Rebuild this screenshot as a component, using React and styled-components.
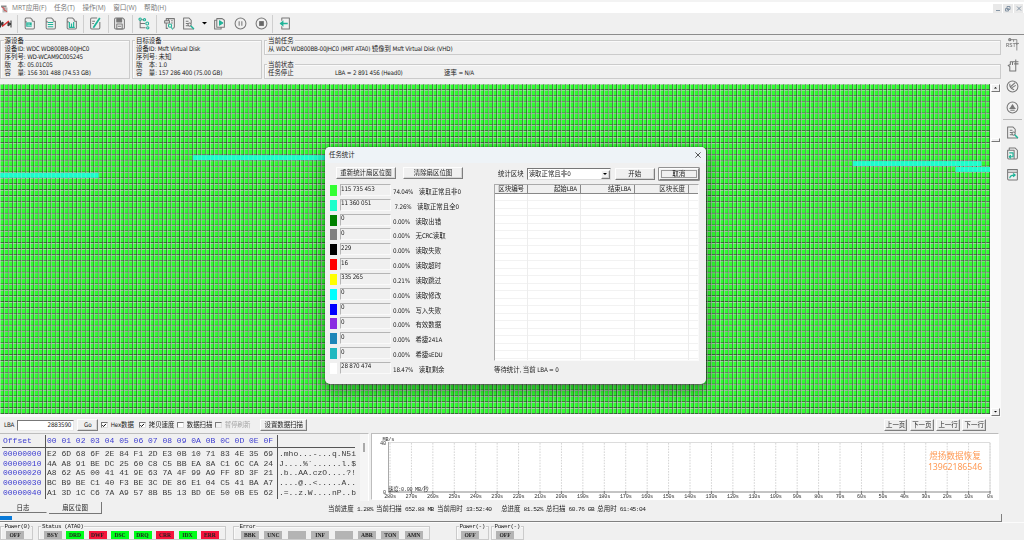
import { useEffect, useRef } from "react";
import styled, { createGlobalStyle } from "styled-components";

const CJK = '"Noto Sans CJK SC", sans-serif';

const GlobalStyle = createGlobalStyle`
  * {
    box-sizing: border-box;
  }
  body {
    margin: 0;
    background: #f0f0f0;
    overflow: hidden;
  }
`;

const Run = styled.span`
  font-family: ${(p) => (p.$mono ? '"Liberation Mono"' : '"DejaVu Sans Condensed", "DejaVu Sans"')}, ${CJK};
  font-stretch: condensed;
  font-size: ${(p) => (p.$mono ? 6.2 : 6.25)}px;
  letter-spacing: ${(p) => (p.$mono ? -0.51 : -0.2)}px;
`;

const Line = styled.span`
  display: inline-block;
  white-space: pre;
  font-family: ${CJK};
  font-size: 6.43px;
  line-height: 8px;
  height: 8px;
`;

// latin runs are narrower than the chinese ones, so they get their own font
const Label = ({ children, mono, className }) => (
  <Line className={className}>
    {children.split(/([\x20-\x7e]+)/).map((part, i) =>
      i % 2 ? (
        <Run key={i} $mono={mono}>
          {part}
        </Run>
      ) : (
        part
      )
    )}
  </Line>
);

const Window = styled.div`
  position: relative;
  display: flex;
  flex-direction: column;
  width: 1024px;
  height: 540px;
  background: #f0f0f0;
  color: #1c1c1c;
`;

/* ---------- menu + toolbar ---------- */

const MenuBar = styled.div`
  display: flex;
  align-items: center;
  height: 13px;
  padding: 2px 1px 0 1px;
  border-top: 2px solid #f3f3f3;
  background: #fff;
`;

const MenuItems = styled.div`
  display: flex;
  flex: 1;
  gap: 7.6px;
  margin: -2px 0 0 4px;
  font-family: "Open Sans", ${CJK};
  font-size: 6.65px;
  line-height: 9px;
  color: #777;
`;

const MdiButtons = styled.div`
  display: flex;
  gap: 1px;
  margin-top: -1px;
`;

const MdiButton = styled.div`
  display: flex;
  width: 9.5px;
  height: 9px;
  background: #e9e9e9;
`;

const Toolbar = styled.div`
  display: flex;
  align-items: center;
  height: 22px;
  border-bottom: 1px solid #8c8c8c;
  svg {
    flex: none;
  }
`;

const Separator = styled.div`
  width: 1px;
  height: 18px;
  background: #cfcfcf;
  margin: 0 ${(p) => p.$after}px 0 ${(p) => p.$before}px;
`;

const Gap = styled.div`
  width: ${(p) => p.$w}px;
`;

const Svg = ({ size = 13, children }) => (
  <svg
    width={size}
    height={size}
    viewBox="0 0 24 24"
    fill="none"
    stroke="#777"
    strokeWidth="1.9"
    strokeLinejoin="round"
  >
    {children}
  </svg>
);

const teal = "#1fb398";

const FileIcon = ({ kind }) => (
  <Svg>
    <path d="M7 9H4V4q0-2 2-2h8l3 3v3M4 8v12q0 2 2 2h13q2 0 2-2V8h-4" />
    {kind === "fill" && <path d="M6 10h10v8H6z" fill={teal} stroke="none" />}
    {kind === "fill" && <path d="M8 13h5M8 16h8" stroke="#d6f1ec" strokeWidth="1.3" />}
    {kind === "lines" && <path d="M7 10h10M7 14h10M7 18h10" stroke={teal} />}
    {kind === "bars" && <path d="M8 9v10h10M12 12v6M16 9v9" stroke={teal} strokeWidth="2.2" />}
  </Svg>
);

const EditIcon = () => (
  <Svg>
    <path d="M15 2H5q-2 0-2 2v16q0 2 2 2h13q2 0 2-2V9M6 8h5M6 12h3" />
    <path d="M20 2L8 20" stroke={teal} strokeWidth="3.2" />
  </Svg>
);

const SaveIcon = () => (
  <Svg>
    <path d="M5 2h13l3 3v15q0 2-2 2H5q-2 0-2-2V4q0-2 2-2z" />
    <path d="M7 3h9v6H7z" fill="#777" />
    <path d="M7 13h10v9H7zM9 17h6" />
  </Svg>
);

const TreeIcon = () => (
  <Svg>
    <path d="M4 5v15h10M4 12h9M6 5h4" />
    <g stroke={teal}>
      <circle cx="4" cy="4" r="2.2" />
      <circle cx="12" cy="5" r="2" />
      <circle cx="17" cy="12" r="2.6" />
      <circle cx="18" cy="20" r="2.2" />
    </g>
  </Svg>
);

const ScanIcon = () => (
  <Svg>
    <path d="M6 7V3h15v15q0 3-3 3M3 7h9v4H3zM6 11v10h3M10 3v4M15 7h3M15 11h3" />
    <circle cx="13" cy="16" r="3" stroke={teal} />
    <path d="M15 19l3 4" stroke={teal} />
  </Svg>
);

const SearchIcon = () => (
  <Svg>
    <path d="M14 22H3V2h10l4 4v6M7 8h5M7 12h4M7 16h5M2 22h20" />
    <circle cx="14" cy="14" r="3" />
    <path d="M16 16l6 6" stroke={teal} strokeWidth="2.6" />
  </Svg>
);

const PlayIcon = () => (
  <Svg>
    <path d="M7 3h10l4 3v13H7zM7 6H3v16h12v-3" />
    <path d="M12 7l6 4-6 4z" fill={teal} stroke={teal} />
  </Svg>
);

const ExitIcon = () => (
  <Svg>
    <path d="M7 7V2h14v20H7v-5" />
    <path d="M18 12H5" stroke={teal} strokeWidth="2.8" />
    <path d="M10 6l-7 6 7 6z" fill={teal} stroke="none" />
  </Svg>
);

const CircleIcon = ({ children }) => (
  <Svg>
    <circle cx="12" cy="12" r="10" />
    {children}
  </Svg>
);

const RstText = styled.text`
  font: 10px "Liberation Mono", monospace;
  fill: #666;
  stroke: none;
`;

/* ---------- shared controls ---------- */

const Button = styled.div`
  display: flex;
  align-items: center;
  justify-content: center;
  width: ${(p) => p.$w}px;
  height: ${(p) => p.$h || 12}px;
  border: 1px solid;
  border-color: #fdfdfd #7e7e7e #7e7e7e #fdfdfd;
  box-shadow: ${(p) => (p.$focus ? "0 0 0 0.6px #555, inset 0 0 0 1px #f0f0f0, inset 0 0 0 2px #999" : "inset -1px -1px 0 #d5d5d5")};
  background: #f0f0f0;
`;

const GroupBox = styled.div`
  width: ${(p) => p.$w}px;
  height: ${(p) => p.$h}px;
  border: 1px solid #cbcbcb;
  box-shadow: inset 1px 1px 0 #fafafa;
  padding-left: ${(p) => p.$pad ?? 3}px;
  display: flex;
  flex-direction: column;
  align-items: flex-start;
`;

const Legend = styled.div`
  display: flex;
  height: 8px;
  margin-top: -4px;
  padding: 0 1px;
  margin-left: -1px;
  background: #f0f0f0;
`;

/* ---------- device info ---------- */

const Body = styled.div`
  display: flex;
  height: 487px;
`;

const Main = styled.div`
  width: 1001px;
`;

const InfoRow = styled.div`
  display: flex;
  gap: 2px;
  height: 49px;
  padding-top: 5px;
`;

const TaskColumn = styled.div`
  display: flex;
  flex-direction: column;
  gap: 9px;
`;

const StateLine = styled.div`
  display: grid;
  grid-template-columns: 67px 109px auto;
`;

/* ---------- sector map ---------- */

const MapRow = styled.div`
  display: flex;
  height: 333px;
  background: #fafafa;
`;

const Canvas = styled.canvas`
  width: 990px;
  height: 330px;
`;

const ScrollBar = styled.div`
  display: flex;
  flex-direction: column;
  width: 10px;
  padding-left: 1px;
`;

const ScrollButton = styled.div`
  display: flex;
  align-items: center;
  justify-content: center;
  height: ${(p) => p.$h}px;
  margin-top: ${(p) => p.$top || 0}px;
  border: 1px solid;
  border-color: #fff #777 #777 #fff;
  background: #f0f0f0;
`;

const CELL_W = 4.2855;
const CELL_H = 5.892;
const COLS = 231;
const ROWS = 56;
// sectors that were read fine but contain only zeroes
const zeroRuns = [
  { row: 12, from: 45, to: 120 },
  { row: 13, from: 199, to: 229 },
  { row: 14, from: 223, to: 231 },
  { row: 15, from: 0, to: 23 },
];

const SectorMap = () => {
  const ref = useRef(null);

  useEffect(() => {
    const ctx = ref.current.getContext("2d");
    ctx.fillStyle = "#2fff2f";
    ctx.fillRect(0, 0, 990, 330);
    for (let y = 0; y <= ROWS; y++) {
      ctx.fillStyle = "#303030";
      ctx.fillRect(0, y * CELL_H - 0.7, 990, 0.7);
      ctx.fillStyle = "#dcd0dc";
      ctx.fillRect(0, y * CELL_H, 990, 0.6);
    }
    for (let x = 0; x <= COLS; x++) {
      ctx.fillStyle = "#303030";
      ctx.fillRect(x * CELL_W - 0.65, 0, 0.65, 330);
      ctx.fillStyle = "#dcd0dc";
      ctx.fillRect(x * CELL_W, 0, 0.55, 330);
    }
    zeroRuns.forEach(({ row, from, to }) => {
      ctx.fillStyle = "#1affcc";
      ctx.fillRect(from * CELL_W, row * CELL_H + 0.5, (to - from) * CELL_W, CELL_H - 1);
      ctx.fillStyle = "#7fe6d4";
      for (let c = from; c < to; c++) {
        ctx.fillRect(c * CELL_W, row * CELL_H + 0.5, 0.5, CELL_H - 1);
      }
    });
  }, []);

  return <Canvas ref={ref} width={990} height={330} />;
};

/* ---------- lower controls ---------- */

const ControlRow = styled.div`
  display: flex;
  align-items: center;
  height: 16px;
  padding-left: 4px;
`;

const Input = styled.div`
  display: flex;
  justify-content: flex-end;
  align-items: center;
  width: 57px;
  height: 11px;
  margin: 0 3px 0 3px;
  padding-right: 2px;
  border: 1px solid;
  border-color: #777 #e8e8e8 #e8e8e8 #777;
  background: #fff;
`;

const CheckItem = styled.div`
  display: flex;
  align-items: center;
  gap: 3px;
  width: ${(p) => p.$w}px;
  color: ${(p) => (p.$off ? "#a5a5a5" : "inherit")};
`;

const Box = styled.div`
  display: flex;
  width: 6.5px;
  height: 6.5px;
  border: 1px solid;
  border-color: #777 #ddd #ddd #777;
  background: ${(p) => (p.$off ? "#f0f0f0" : "#fff")};
`;

const Check = ({ w, on, off, children }) => (
  <CheckItem $w={w} $off={off}>
    <Box $off={off}>
      {on && (
        <svg width="5" height="5" viewBox="0 0 5 5" fill="none" stroke="#000" strokeWidth="1.1">
          <path d="M0.4 2.2L1.7 3.6L4.4 0.7" />
        </svg>
      )}
    </Box>
    <Label>{children}</Label>
  </CheckItem>
);

const Pager = styled.div`
  display: flex;
  gap: 2.6px;
  margin-left: auto;
  padding-right: 15px;
`;

/* ---------- hex view ---------- */

const BottomRow = styled.div`
  display: flex;
  height: 68px;
`;

const HexPanel = styled.div`
  display: flex;
  width: 369px;
  margin-right: 2px;
  border-top: 1px solid #bdbdbd;
  border-right: 1px solid #fff;
`;

const HexTable = styled.div`
  display: grid;
  grid-template-columns: 44px 232px 77px;
  grid-template-rows: 13px 51px;
  width: 353px;
  margin: 1px 5px 0 2px;
  font-family: "Liberation Mono", monospace;
  font-size: 8.03px;
  line-height: 9.65px;
  white-space: pre;
  color: #3a3a3a;
`;

const HexCell = styled.div`
  height: ${(p) => (p.$head ? 13 : 51)}px;
  padding: 1px 0 0 1px;
  color: ${(p) => (p.$blue ? "#3c3cd0" : "inherit")};
  border-right: ${(p) => (p.$line ? "1px solid #555" : "none")};
  border-bottom: ${(p) => (p.$head ? "1px solid #555" : "none")};
`;

const HexScroll = styled.div`
  width: 8px;
  padding: 9px 0 0 3px;
  background: #f5f5f5;
`;

const HexThumb = styled.div`
  width: 2px;
  height: 9px;
  background: #aaa;
`;

const hexRows = [
  ["00000000", "E2 6D 68 6F 2E 84 F1 2D E3 0B 10 71 83 4E 35 69", ".mho...-...q.N5i"],
  ["00000010", "4A A8 91 BE DC 25 60 C8 C5 BB EA 8A C1 6C CA 24", "J....%`......l.$"],
  ["00000020", "A8 62 A5 00 41 41 9E 63 7A 4F 99 A9 FF 8D 3F 21", ".b..AA.czO....?!"],
  ["00000030", "BC B9 BE C1 40 F3 BE 3C DE 86 E1 04 C5 41 BA A7", "....@..<.....A.."],
  ["00000040", "A1 3D 1C C6 7A A9 57 8B B5 13 BD 6E 50 0B E5 62", ".=..z.W....nP..b"],
];
const hexColumn = (i) => hexRows.map((row) => row[i]).join("\n");

/* ---------- speed chart ---------- */

const ChartPanel = styled.div`
  position: relative;
  width: 628px;
  height: 67px;
  border: 1px solid #bdbdbd;
  border-right-color: #fff;
  border-bottom-color: #fff;
  background: #fff;
  svg {
    display: block;
  }
  text {
    font: 5.2px "Liberation Mono", "Noto Sans CJK SC", monospace;
    letter-spacing: -0.2px;
    fill: #333;
  }
`;

const Watermark = styled.div`
  position: absolute;
  top: 17px;
  right: 13px;
  width: 60px;
  text-align: center;
  font-family: "Noto Sans", ${CJK};
  font-size: 8.6px;
  line-height: 11px;
  color: #ff9a55;
  span {
    display: block;
    font-size: 8.7px;
    letter-spacing: -0.05px;
  }
`;

const SpeedChart = () => {
  const ticks = Array.from({ length: 29 }, (_, i) => i);
  return (
    <ChartPanel>
      <svg width="626" height="65" viewBox="0 0 626 65">
        <path d="M16.5 8.5H618V58" stroke="#dcdcdc" fill="none" />
        <path d="M16.5 8v50" stroke="#aaa" />
        {ticks.map((i) => (
          <g key={i}>
            <path
              d={`M${18 + i * 21.43} 9v49`}
              stroke="#d4d4d4"
              strokeDasharray="1.6 1.2"
            />
            <path d={`M${18 + i * 21.43} 57v3`} stroke="#555" strokeWidth="0.8" />
            <text x={18 + i * 21.43} y="64.2" textAnchor="middle">
              {280 - i * 10}s
            </text>
          </g>
        ))}
        <path d="M16 58H618.5" stroke="#888" />
        <text x="10.5" y="6.5">MB/s</text>
        <text x="8" y="10.8">40</text>
        <text x="11" y="59.6">0</text>
        <text x="16.5" y="57.2" textLength="40">速度:0.00 MB/秒</text>
      </svg>
      <Watermark>
        煜扬数据恢复
        <span>13962186546</span>
      </Watermark>
    </ChartPanel>
  );
};

/* ---------- tabs, progress, status ---------- */

const TabRow = styled.div`
  display: flex;
  align-items: center;
  height: 13px;
`;

const Tab = styled.div`
  display: flex;
  align-items: center;
  justify-content: center;
  width: ${(p) => p.$w}px;
  height: ${(p) => (p.$active ? 12 : 10)}px;
  padding-top: 1px;
  margin-right: 2px;
  border-bottom: 1px solid #777;
  border-right: 1px solid ${(p) => (p.$active ? "#777" : "#f0f0f0")};
`;

const ProgressText = styled.div`
  display: flex;
  margin: 2px 0 0 224px;
`;

const Progress = styled.div`
  width: 1002px;
  height: 8px;
  padding-top: 2px;
  border-bottom: 1px solid #808080;
  border-right: 1px solid #808080;
`;

const ProgressBar = styled.div`
  width: 12px;
  height: 4px;
  background: #0a7ad8;
`;

const StatusRow = styled.div`
  display: flex;
  height: 18px;
  padding-top: 3px;
  border-top: 1px solid #fbfbfb;
`;

const StatusGroup = styled(GroupBox)`
  height: 14px;
  margin-right: ${(p) => p.$mr}px;
`;

const Leds = styled.div`
  display: flex;
  gap: ${(p) => p.$gap || 4.5}px;
`;

const ledColors = { on: "#00ff1a", error: "#f5143c", idle: "#b4b4b4" };

const Led = styled.div`
  display: flex;
  align-items: center;
  justify-content: center;
  width: 18px;
  height: 8px;
  font: bold 5.6px/8px "Liberation Serif", serif;
  color: #222;
  background: ${(p) => ledColors[p.$state || "idle"]};
`;

const StatusLegend = styled(Legend)`
  margin-left: -2.5px;
  font: 6px/8px "Liberation Mono", monospace;
  letter-spacing: -0.42px;
  white-space: pre;
`;

const statusLeds = [
  ["BSY", "idle"],
  ["DRD", "on"],
  ["DWF", "error"],
  ["DSC", "on"],
  ["DRQ", "on"],
  ["CRR", "error"],
  ["IDX", "on"],
  ["ERR", "error"],
];
const errorLeds = ["BBK", "UNC", "", "INF", "", "ABR", "TON", "AMN"];

/* ---------- side bar ---------- */

const SideBar = styled.div`
  display: flex;
  flex-direction: column;
  align-items: center;
  gap: 8px;
  width: 22px;
  padding-top: 3px;
`;

const SideLine = styled.div`
  width: 19px;
  height: 1px;
  margin: -3px 0 -2px;
  background: #bbb;
`;

/* ---------- dialog ---------- */

const Dialog = styled.div`
  position: absolute;
  left: 325px;
  top: 147px;
  width: 381px;
  height: 237px;
  border-radius: 5px;
  overflow: hidden;
  background: #f0f0f0;
`;

const DialogShadow = styled.div`
  position: absolute;
  left: 325px;
  top: 147px;
  width: 381px;
  height: 237px;
  border-radius: 5px;
  box-shadow: 0 5px 14px 2px rgba(0, 0, 0, 0.34), 0 0 2px rgba(0, 0, 0, 0.5);
`;

const TitleBar = styled.div`
  display: flex;
  align-items: center;
  justify-content: space-between;
  height: 16px;
  padding: 0 5px 1px 4px;
  background: #eef3f7;
`;

const DialogBody = styled.div`
  display: flex;
  padding: 4px 7px 0 5px;
`;

const StatsColumn = styled.div`
  width: 164px;
`;

const ButtonPair = styled.div`
  display: flex;
  gap: 7px;
  padding-left: 6px;
  margin-bottom: 5px;
`;

const StatRow = styled.div`
  display: flex;
  height: 14.83px;
`;

const Swatch = styled.div`
  width: 7px;
  height: 11px;
  margin: 1px 3px 0 0;
  background: ${(p) => p.$color};
`;

const Field = styled.div`
  display: flex;
  width: 50.5px;
  height: 12px;
  margin-right: 2.5px;
  border: 1px solid;
  border-color: #b5b5b5 #fafafa #fafafa #b5b5b5;
  span {
    margin-top: -0.5px;
  }
`;

const StatText = styled.div`
  display: flex;
  gap: 5.6px;
  padding-top: 4px;
`;

const BlockColumn = styled.div`
  display: flex;
  flex-direction: column;
  width: 205px;
`;

const Filter = styled.div`
  display: flex;
  align-items: center;
  height: 14px;
  margin-bottom: 3px;
  padding-left: 4px;
`;

const Select = styled.div`
  display: flex;
  align-items: center;
  justify-content: space-between;
  width: 84px;
  height: 11.5px;
  margin: 0 4px 0 3px;
  padding-left: 1px;
  border: 1px solid;
  border-color: #777 #ddd #ddd #777;
  background: #fff;
`;

const List = styled.div`
  height: 177px;
  border: 1px solid;
  border-color: #aaa #fafafa #fafafa #aaa;
  background: #fff;
`;

const cols = "32.5px 53px 54px 54px 1fr";

const ListHead = styled.div`
  display: grid;
  grid-template-columns: ${cols};
  height: 9px;
  background: #f0f0f0;
  border-bottom: 1px solid #888;
`;

const HeadCell = styled.div`
  display: flex;
  justify-content: flex-end;
  padding-right: 2.5px;
  border-right: ${(p) => (p.$last ? "none" : "1px solid #888")};
`;

const ListGrid = styled.div`
  display: grid;
  grid-template-columns: ${cols};
  height: 166px;
  background: repeating-linear-gradient(transparent 0 6.5px, #f2f2f2 6.5px 7.5px);
`;

const GridColumn = styled.div`
  border-right: ${(p) => (p.$last ? "none" : "1px solid #ededed")};
`;

const Note = styled.div`
  display: flex;
  padding-top: 5px;
`;

const stats = [
  ["#33ff33", "115 735 453", "74.04%", "读取正常且非0"],
  ["#1affcc", "11 360 051", " 7.26%", "读取正常且全0"],
  ["#008000", "0", "0.00%", "读取出错"],
  ["#808080", "0", "0.00%", "无CRC读取"],
  ["#000000", "229", "0.00%", "读取失败"],
  ["#ff0000", "16", "0.00%", "读取超时"],
  ["#ffff00", "335 265", "0.21%", "读取跳过"],
  ["#00ffff", "0", "0.00%", "读取修改"],
  ["#0000ff", "0", "0.00%", "写入失败"],
  ["#8a2be2", "0", "0.00%", "有效数据"],
  ["#1e86b8", "0", "0.00%", "希捷241A"],
  ["#20b8c0", "0", "0.00%", "希捷sEDU"],
  ["#ffffff", "28 870 474", "18.47%", "读取剩余"],
];

const Arrow = ({ up, size = 4 }) => (
  <svg width={size} height={size / 2} viewBox="0 0 8 4">
    <path d={up ? "M0 4h8L4 0z" : "M0 0h8L4 4z"} fill="#000" />
  </svg>
);

const StatsDialog = () => (
  <>
    <DialogShadow />
    <Dialog>
      <TitleBar>
        <Label>任务统计</Label>
        <svg width="6" height="6" viewBox="0 0 6 6" stroke="#444" strokeWidth="0.9">
          <path d="M0.4 0.4l5.2 5.2M5.6 0.4L0.4 5.6" />
        </svg>
      </TitleBar>
      <DialogBody>
        <StatsColumn>
          <ButtonPair>
            <Button $w={60}>
              <Label>重新统计扇区位图</Label>
            </Button>
            <Button $w={60}>
              <Label>清除扇区位图</Label>
            </Button>
          </ButtonPair>
          {stats.map(([color, count, percent, name]) => (
            <StatRow key={name}>
              <Swatch $color={color} />
              <Field>
                <Label>{count}</Label>
              </Field>
              <StatText>
                <Label>{percent}</Label>
                <Label>{name}</Label>
              </StatText>
            </StatRow>
          ))}
        </StatsColumn>
        <BlockColumn>
          <Filter>
            <Label>统计区块</Label>
            <Select>
              <Label>读取正常且非0</Label>
              <Button $w={9} $h={9}>
                <Arrow />
              </Button>
            </Select>
            <Button $w={40}>
              <Label>开始</Label>
            </Button>
            <Gap $w={4} />
            <Button $w={40} $focus>
              <Label>取消</Label>
            </Button>
          </Filter>
          <List>
            <ListHead>
              {["区块编号", "起始LBA", "结束LBA", "区块长度"].map((title) => (
                <HeadCell key={title}>
                  <Label>{title}</Label>
                </HeadCell>
              ))}
              <HeadCell $last />
            </ListHead>
            <ListGrid>
              <GridColumn />
              <GridColumn />
              <GridColumn />
              <GridColumn />
              <GridColumn $last />
            </ListGrid>
          </List>
          <Note>
            <Label>等待统计, 当前 LBA = 0</Label>
          </Note>
        </BlockColumn>
      </DialogBody>
    </Dialog>
  </>
);

const App = () => {
  return (
    <Window>
      <GlobalStyle />
      <MenuBar>
        <svg width="7" height="8" viewBox="0 0 14 16">
          <path d="M0 1h11v4H0z" fill="#8b8b8b" />
          <path d="M3 5h10v10H3z" fill="#b9b9b9" />
          <path d="M2 5l4 1v4l6 3" stroke="#d34b4b" strokeWidth="2" fill="none" />
        </svg>
        <MenuItems>
          <span>MRT应用(F)</span>
          <span>任务(T)</span>
          <span>操作(M)</span>
          <span>窗口(W)</span>
          <span>帮助(H)</span>
        </MenuItems>
        <MdiButtons>
          {["M3 6.5h4", "M4 2.5h3v3H4zM2.5 4.5h3v2.5h-3z", "M3 2.5l4 4M7 2.5l-4 4"].map((d) => (
            <MdiButton key={d}>
              <svg width="9" height="9" viewBox="0 0 9 9" fill="none" stroke="#8595a5">
                <path d={d} />
              </svg>
            </MdiButton>
          ))}
        </MdiButtons>
      </MenuBar>

      <Toolbar>
        <svg width="12" height="12" viewBox="0 0 12 12" fill="none" stroke="#333">
          <path d="M0.5 2.5v7M11 2.5v7M0 6l3-2v4zM11 6L8 4v4z" fill="#444" />
          <path d="M2 8.5L9 3" stroke="#e03030" strokeWidth="1.5" />
        </svg>
        <Separator $before={5} $after={5} />
        <FileIcon kind="fill" />
        <Gap $w={7.8} />
        <FileIcon kind="lines" />
        <Gap $w={7.8} />
        <FileIcon kind="bars" />
        <Separator $before={5} $after={5.5} />
        <EditIcon />
        <Separator $before={6} $after={4} />
        <SaveIcon />
        <Separator $before={5.5} $after={5} />
        <TreeIcon />
        <Separator $before={5} $after={6} />
        <ScanIcon />
        <Gap $w={6.5} />
        <SearchIcon />
        <Gap $w={7} />
        <Arrow size={5} />
        <Gap $w={6} />
        <PlayIcon />
        <Gap $w={7.5} />
        <CircleIcon>
          <path d="M9.5 8v8M14.5 8v8" />
        </CircleIcon>
        <Gap $w={8} />
        <CircleIcon>
          <path d="M8.5 8.5h7v7h-7z" fill="#666" />
        </CircleIcon>
        <Separator $before={4.5} $after={5} />
        <ExitIcon />
      </Toolbar>

      <Body>
        <Main>
          <InfoRow>
            <GroupBox $w={130} $h={39} $pad={3.6}>
              <Legend>
                <Label>源设备</Label>
              </Legend>
              <Label>设备ID: WDC WD800BB-00JHC0</Label>
              <Label>序列号: WD-WCAM9C005245</Label>
              <Label>版　本: 05.01C05</Label>
              <Label>容　量: 156 301 488 (74.53 GB)</Label>
            </GroupBox>
            <GroupBox $w={130} $h={39}>
              <Legend>
                <Label>目标设备</Label>
              </Legend>
              <Label>设备ID: Msft Virtual Disk</Label>
              <Label>序列号: 未知</Label>
              <Label>版　本: 1.0</Label>
              <Label>容　量: 157 286 400 (75.00 GB)</Label>
            </GroupBox>
            <TaskColumn>
              <GroupBox $w={737} $h={15}>
                <Legend>
                  <Label>当前任务</Label>
                </Legend>
                <Label>从 WDC WD800BB-00JHC0 (MRT ATA0) 镜像到 Msft Virtual Disk (VHD)</Label>
              </GroupBox>
              <GroupBox $w={737} $h={15}>
                <Legend>
                  <Label>当前状态</Label>
                </Legend>
                <StateLine>
                  <Label>任务停止</Label>
                  <Label>LBA = 2 891 456 (Head0)</Label>
                  <Label>速率 = N/A</Label>
                </StateLine>
              </GroupBox>
            </TaskColumn>
          </InfoRow>

          <MapRow>
            <SectorMap />
            <ScrollBar>
              <ScrollButton $h={8}>
                <Arrow up size={3} />
              </ScrollButton>
              <ScrollButton $h={4} $top={46} />
              <ScrollButton $h={8.5} $top={265.5}>
                <Arrow size={3} />
              </ScrollButton>
            </ScrollBar>
          </MapRow>

          <ControlRow>
            <Label>LBA</Label>
            <Input>
              <Label>2883590</Label>
            </Input>
            <Button $w={21} $h={11.5}>
              <Label>Go</Label>
            </Button>
            <Gap $w={3} />
            <Check w={38} on>
              Hex数据
            </Check>
            <Check w={38} on>
              拷贝速度
            </Check>
            <Check w={38}>数据扫描</Check>
            <Check w={45} off>
              暂停刷新
            </Check>
            <Button $w={47}>
              <Label>设置数据扫描</Label>
            </Button>
            <Pager>
              {["上一页", "下一页", "上一行", "下一行"].map((text) => (
                <Button key={text} $w={23.6} $h={11.5}>
                  <Label>{text}</Label>
                </Button>
              ))}
            </Pager>
          </ControlRow>

          <BottomRow>
            <HexPanel>
              <HexTable>
                <HexCell $head $blue $line>
                  Offset
                </HexCell>
                <HexCell $head $blue $line>
                  00 01 02 03 04 05 06 07 08 09 0A 0B 0C 0D 0E 0F
                </HexCell>
                <HexCell $head />
                <HexCell $blue $line>
                  {hexColumn(0)}
                </HexCell>
                <HexCell $line>{hexColumn(1)}</HexCell>
                <HexCell>{hexColumn(2)}</HexCell>
              </HexTable>
              <HexScroll>
                <HexThumb />
              </HexScroll>
            </HexPanel>
            <SpeedChart />
          </BottomRow>

          <TabRow>
            <Tab $w={47}>
              <Label>日志</Label>
            </Tab>
            <Tab $w={53} $active>
              <Label>扇区位图</Label>
            </Tab>
            <ProgressText>
              <Label mono>
                {"当前进度 1.28% 当前扫描 652.88 MB 当前用时 13:52:40   总进度 81.52% 总扫描 60.76 GB 总用时 61:45:04"}
              </Label>
            </ProgressText>
          </TabRow>
          <Progress>
            <ProgressBar />
          </Progress>
        </Main>

        <SideBar>
          <Svg>
            <path d="M6 3h14v10M14 3v4M17 10h7M20 10v13" strokeWidth="1.5" />
            <circle cx="7" cy="3" r="2" />
            <RstText x="0" y="16">
              RST
            </RstText>
          </Svg>
          <Svg>
            <path d="M15 5H8v5l-4 2 3 2v8h11V9M12 5v6M15 5h8M18 1v8M15 9h8" />
          </Svg>
          <CircleIcon>
            <path d="M7 7q-1 8 8 11M9 12l8-7M11 14l7-4" />
          </CircleIcon>
          <CircleIcon>
            <path d="M12 7l3 5 2 2H7l2-2z" fill="#777" />
            <path d="M8 17h8" />
          </CircleIcon>
          <SideLine />
          <SearchIcon />
          <Svg>
            <path d="M6 6V2h11l4 4v14q0 2-2 2h-4M3 6h12v16H5q-2 0-2-2z" />
            <path d="M6 11h7v7H7M9 15l-3 3 3 3" stroke={teal} strokeWidth="2.2" />
          </Svg>
          <Svg>
            <path d="M3 3h18v18q0 1-1 1H5q-2 0-2-2zM3 8h18" />
            <path d="M7 19q0-6 8-6M13 10l4 3-4 3" stroke={teal} strokeWidth="2.2" />
          </Svg>
        </SideBar>
      </Body>

      <StatusRow>
        <StatusGroup $w={33} $mr={5} $pad={5}>
          <StatusLegend>Power(0)</StatusLegend>
          <Led>OFF</Led>
        </StatusGroup>
        <StatusGroup $w={188} $mr={7} $pad={4.5}>
          <StatusLegend>Status (ATA0)</StatusLegend>
          <Leds>
            {statusLeds.map(([name, state]) => (
              <Led key={name} $state={state}>
                {name}
              </Led>
            ))}
          </Leds>
        </StatusGroup>
        <StatusGroup $w={197} $mr={26} $pad={7}>
          <StatusLegend>Error</StatusLegend>
          <Leds $gap={5.4}>
            {errorLeds.map((name, i) => (
              <Led key={i}>{name}</Led>
            ))}
          </Leds>
        </StatusGroup>
        <StatusGroup $w={33} $mr={2} $pad={4}>
          <StatusLegend>Power(-)</StatusLegend>
          <Led>OFF</Led>
        </StatusGroup>
        <StatusGroup $w={33} $mr={0} $pad={4}>
          <StatusLegend>Power(-)</StatusLegend>
          <Led>OFF</Led>
        </StatusGroup>
      </StatusRow>

      <StatsDialog />
    </Window>
  );
};

export default App;
